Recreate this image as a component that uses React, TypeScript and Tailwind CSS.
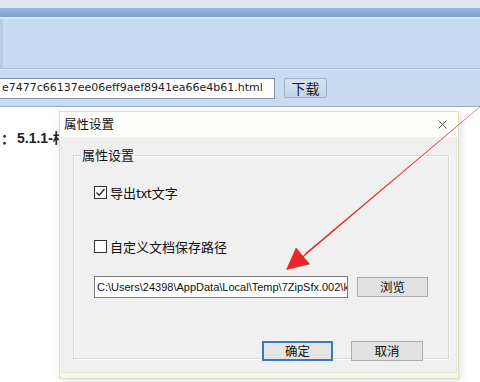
import { X } from "lucide-react";

const cjk = { fontFamily: '"Noto Sans CJK SC", "Noto Sans", sans-serif' };

const CheckBox = ({ checked }: { checked?: boolean }) => (
  <span className="w-[13px] h-[13px] border border-[#333] bg-white flex items-center justify-center shrink-0">
    {checked && (
      <svg width="11" height="11" viewBox="0 0 11 11">
        <path d="M1.5 5.5 L4.2 8.2 L9.5 2" fill="none" stroke="#222" strokeWidth="1.3" />
      </svg>
    )}
  </span>
);

const Arrow = () => (
  <svg className="absolute inset-0 pointer-events-none" width="480" height="382" viewBox="0 0 480 382">
    <polygon points="482.8,104.1 481.2,105.9 300.5,259.5 305.5,253.0" fill="#e8272c" />
    <polygon points="286,270 296,247.6 310,264.2" fill="#e8272c" />
  </svg>
);

export default function App() {
  return (
    <div className="relative w-[480px] h-[382px] overflow-hidden bg-white" style={cjk}>
      {/* toolbar */}
      <div className="h-[8px] bg-[#dfe6ee]" />
      <div className="h-[9px] bg-gradient-to-b from-[#9ab8df] to-[#7b9fd0]" />
      <div className="h-[2px] bg-[#dce8f6]" />
      <div className="h-[49px] bg-[#c6daf2] border-l-[3px] border-[#b7cbe3]" />
      <div className="h-[1px] bg-[#a6b9d0]" />
      <div className="h-[1px] bg-[#e2ecf8]" />
      <div className="h-[37px] bg-[#c8dbf1] flex items-center gap-[9px] border-b border-[#98a8bc]">
        <div
          className="w-[275px] h-[21px] bg-white border border-l-0 border-[#7d91ab] flex items-center pl-[2px] text-[11px] text-[#222] whitespace-nowrap overflow-hidden"
          style={{ fontFamily: '"DejaVu Sans", sans-serif' }}
        >
          e7477c66137ee06eff9aef8941ea66e4b61.html
        </div>
        <div className="w-[43px] h-[20px] rounded-[2px] border border-[#9cb1cc] bg-gradient-to-b from-[#d7e3f1] to-[#c2d4ea] flex items-center justify-center text-[14px] text-[#1a1a1a]">
          下载
        </div>
      </div>

      {/* page content behind */}
      <div className="pt-[21px] pl-[1px] text-[14px] font-semibold text-[#222] whitespace-nowrap flex items-center">
        <span>：</span>
        <span className="ml-[2px]" style={{ fontFamily: '"Liberation Sans", "Noto Sans CJK SC", sans-serif' }}>5.1.1-相关</span>
      </div>

      {/* dialog */}
      <div className="absolute left-[59px] top-[111px] w-[400px] h-[268px] border border-[#dbe2c4] bg-[#f5f7ea] shadow-[2px_2px_8px_rgba(0,0,0,0.12)] flex flex-col">
        <div className="h-[25px] bg-[#fdfdf9] flex items-center justify-between pl-[4px] pr-[8px] text-[12.5px] text-[#111]">
          <span>属性设置</span>
          <X className="w-[15px] h-[15px] text-[#333]" strokeWidth={1.3} />
        </div>
        <div className="mx-[1px] mb-[5px] flex-1 bg-[#f0f0f0] border border-t-0 border-[#e6eadb] pl-[11px] pr-[9px] pt-[11px]">
          <fieldset className="h-[211px] border border-[#d9d9d9] shadow-[inset_1px_1px_0_#fff,1px_1px_0_#fff] px-[20px]">
            <legend className="-ml-[13px] px-[1px] text-[13px] text-[#111] leading-[14px]">属性设置</legend>
            <div className="mt-[21px] flex items-center gap-[3px] text-[13px] text-[#111]">
              <CheckBox checked />
              <span>导出txt文字</span>
            </div>
            <div className="mt-[34px] flex items-center gap-[3px] text-[13px] text-[#111]">
              <CheckBox />
              <span>自定义文档保存路径</span>
            </div>
            <div className="mt-[20px] flex items-center gap-[9px]">
              <div
                className="w-[254px] h-[22px] bg-white border border-[#7a7a7a] flex items-center pl-[2px] text-[11px] text-[#111] whitespace-nowrap overflow-hidden"
                style={{ fontFamily: '"Liberation Sans", sans-serif' }}
              >
                C:\Users\24398\AppData\Local\Temp\7ZipSfx.002\k
              </div>
              <div className="w-[71px] h-[20px] border border-[#adadad] bg-[#e1e1e1] flex items-center justify-center text-[12.5px] text-[#111]">
                浏览
              </div>
            </div>
            <div className="mt-[43px] flex justify-end gap-[18px] pr-[5px]">
              <div className="w-[71px] h-[20px] border-2 border-[#2f7ad0] bg-[#e5e5e5] flex items-center justify-center text-[12.5px] text-[#111]">
                确定
              </div>
              <div className="w-[72px] h-[20px] border border-[#adadad] bg-[#e1e1e1] flex items-center justify-center text-[12.5px] text-[#111]">
                取消
              </div>
            </div>
          </fieldset>
        </div>
      </div>

      <Arrow />
    </div>
  );
}
